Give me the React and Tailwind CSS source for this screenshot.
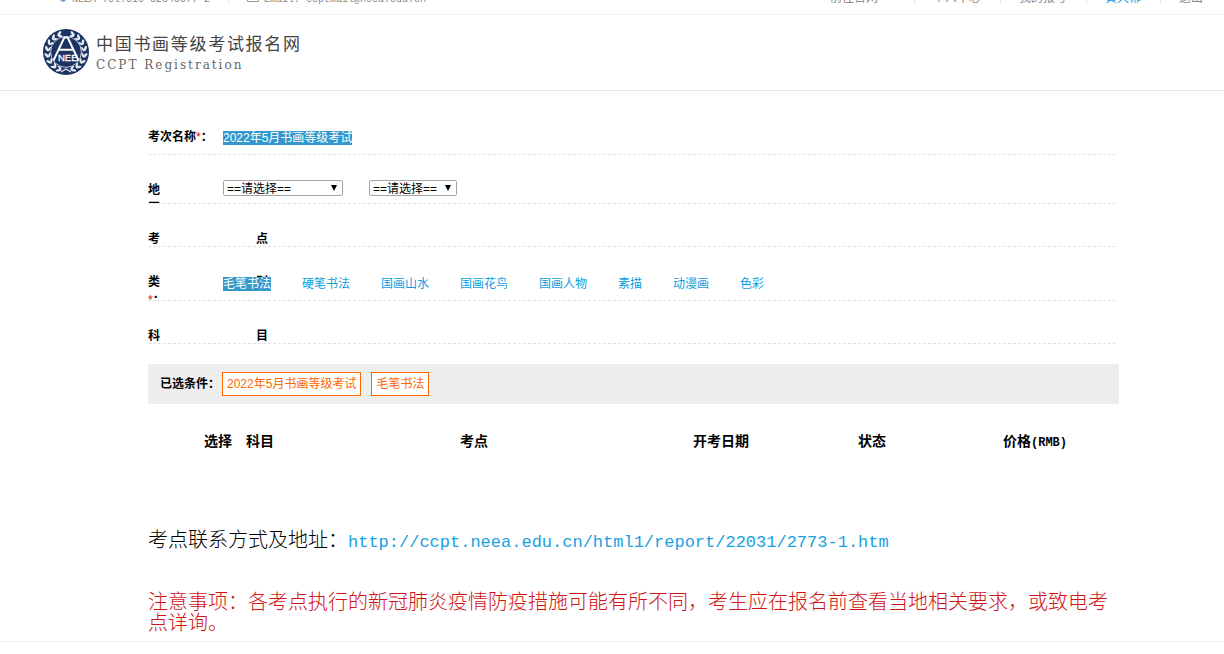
const navLinks = [
  { label: '前往官网', style: 'pr-9' },
  { label: '个人中心', style: 'pr-[19px] pl-[18px]' },
  { label: '我的报考', style: 'pr-[19px] pl-[18px]' },
  { label: '黄大郴', style: 'pr-[19px] pl-[18px] text-[#0f9de0]' },
  { label: '退出', style: 'pl-[18px]' },
]

const categories = ['毛笔书法', '硬笔书法', '国画山水', '国画花鸟', '国画人物', '素描', '动漫画', '色彩']

const leaves = [20, 40, 60, 80, 100, 120, 140, 158]

function Logo() {
  return (
    <svg viewBox="0 0 46 46" className="size-[46px] shrink-0" role="img" aria-label="NEEA">
      <circle cx="23" cy="23" r="23" fill="#1c3263" />
      {/* laurel wreath, one branch per side */}
      {[1, -1].map((side) => (
        <g key={side} fill="#e6ebf3">
          {leaves.map((a) => (
            <g key={a} transform={`rotate(${a * side} 23 23)`}>
              <ellipse cx="23" cy="3.4" rx="2.9" ry="1.3" transform={`rotate(${side * 32} 23 3.4)`} />
              <ellipse cx="23" cy="6.2" rx="2.5" ry="1.1" transform={`rotate(${side * -28} 23 6.2)`} />
            </g>
          ))}
        </g>
      ))}
      <path d="M18 43l5-3 5 3" fill="none" stroke="#e6ebf3" strokeWidth="1.2" />
      <circle cx="23" cy="23" r="15.4" fill="#1c3263" stroke="#b9c4d8" strokeWidth="1" />
      <path d="M10.5 31.5L21.3 8.5h3.4L35.5 31.5M16.5 20.7h13" fill="none" stroke="#fff" strokeWidth="2" />
      <path d="M16 23.4h14.5l3 8H16z" fill="#1c3263" />
      <text x="15" y="31.5" fill="#fff" stroke="#fff" strokeWidth="0.3" fontSize="9.5" fontFamily="Liberation Sans, sans-serif">NEE</text>
    </svg>
  )
}

function TopBar() {
  return (
    <div className="flex h-[39px] items-start justify-between border-b border-[#f2f2f2] pt-4 pr-[21px] pl-[56px] text-xs leading-3 text-[#888]">
      <div className="flex font-['Liberation_Mono',monospace] text-[10px] leading-4">
        <span className="flex gap-1">
          <svg viewBox="0 0 12 12" className="size-3" aria-hidden="true">
            <path d="M2 0l2 2-1 2 2 2 2-1 3 3-2 2C5 10 1 6 1 2z" fill="#6fa3cf" />
          </svg>
          NEEA Tel:010-82345677-2
        </span>
        <span className="mx-[18px] h-3 w-px bg-[#e5e5e5]" />
        <span className="flex gap-[5px]">
          <svg viewBox="0 0 12 12" className="size-3" aria-hidden="true">
            <path d="M.5 .5h11v9H.5zM.5 1L6 6l5.5-5" fill="none" stroke="#999" />
          </svg>
          Email: ccptmail@neea.edu.cn
        </span>
      </div>
      <nav className="flex divide-x divide-[#e5e5e5]">
        {navLinks.map(({ label, style }) => (
          <a key={label} href="#" className={style}>{label}</a>
        ))}
      </nav>
    </div>
  )
}

function Row({ height, label, children }) {
  return (
    <div className={`mr-[3px] flex overflow-hidden border-b border-dashed border-[#e2e2e2] pt-[25px] ${height}`}>
      {/* two-character labels are justified over a box wider than the column */}
      <div className="w-[75px] shrink-0 pt-px font-bold">
        <div className="w-[120px]">{label}</div>
      </div>
      {children}
    </div>
  )
}

function Spread({ text }) {
  return (
    <span className="flex justify-between">
      {[...text].map((c) => <span key={c}>{c}</span>)}
    </span>
  )
}

function Select({ label, width }) {
  return (
    <div className={`relative h-4 ${width}`}>
      <select
        aria-label={label}
        className="block h-4 w-full appearance-none rounded-xs border border-[#a6a6a6] bg-white pt-px pl-[3px] text-xs leading-[14px] text-black"
      >
        <option>==请选择==</option>
      </select>
      <svg viewBox="0 0 6 6" className="pointer-events-none absolute top-[5px] right-1.5 size-1.5" aria-hidden="true">
        <path d="M0 0h6L3 6z" fill="#000" />
      </svg>
    </div>
  )
}

function Chip({ children }) {
  return (
    <button type="button" className="h-6 border border-[#ff6600] bg-white px-1 leading-[22px] text-[#ff6600]">
      {children}
    </button>
  )
}

export default function App() {
  return (
    <div lang="zh-CN" className="overflow-hidden bg-white font-['Liberation_Sans','Noto_Sans_CJK_SC',sans-serif] text-xs text-black">
      {/* the top bar is mostly scrolled out of view */}
      <div className="-mt-6">
        <TopBar />

        <header className="flex h-[76px] items-center gap-[7px] border-b border-[#e5e5e5] pb-px pl-[43px]">
          <Logo />
          <div className="pt-[3px]">
            <h1 className="text-[17px] leading-[22px] tracking-widest text-[#444]">中国书画等级考试报名网</h1>
            <p className="font-['DejaVu_Serif',serif] text-xs leading-[18px] tracking-[2px] text-[#666]">
              CCPT Registration
            </p>
          </div>
        </header>

        <main className="pr-[105px] pl-[148px]">
          <section className="pt-[11px] leading-[18px]">
            <Row height="h-[53px]" label={<>考次名称<span className="font-normal text-red-600">*</span>：</>}>
              <a href="#" className="mt-1 h-[14px] bg-[#3398cc] leading-[14px] text-white">2022年5月书画等级考试</a>
            </Row>
            <Row height="h-[49px]" label={<>地<br />区</>}>
              <div className="flex gap-[26px]">
                <Select label="省份" width="w-[120px]" />
                <Select label="城市" width="w-[88px]" />
              </div>
            </Row>
            <Row height="h-[43px]" label={<Spread text="考点" />} />
            <Row
              height="h-[54px]"
              label={<><Spread text="类别" /><span className="font-normal text-red-600">*</span>：</>}
            >
              <div className="z-10 mt-[5px] flex gap-[31px] leading-[14px]">
                {categories.map((name, i) => (
                  <a
                    key={name}
                    href="#"
                    className={i === 0 ? 'h-[14px] bg-[#3398cc] text-white' : 'h-[14px] text-[#0f9de0]'}
                  >
                    {name}
                  </a>
                ))}
              </div>
            </Row>
            <Row height="h-[43px]" label={<Spread text="科目" />} />
          </section>

          <div className="mt-5 flex h-10 items-center bg-[#eee] pl-3">
            <span className="mr-0.5 font-bold">已选条件：</span>
            <div className="flex gap-2.5">
              <Chip>2022年5月书画等级考试</Chip>
              <Chip>毛笔书法</Chip>
            </div>
          </div>

          <table className="mt-[27px] w-full table-fixed text-sm leading-5">
            <thead>
              <tr>
                <th className="w-[91px] pr-[7px] text-right">选择</th>
                <th className="w-[42px]">科目</th>
                <th>考点</th>
                <th className="w-[108px]">开考日期</th>
                <th className="w-[194px]">状态</th>
                <th className="w-[150px] pr-[18px]">
                  价格<span className="font-['Liberation_Mono',monospace] text-xs">(RMB)</span>
                </th>
              </tr>
            </thead>
          </table>

          <p className="mt-[79px] text-xl leading-[21px] font-light">
            考点联系方式及地址：
            <a
              href="http://ccpt.neea.edu.cn/html1/report/22031/2773-1.htm"
              className="font-['Liberation_Mono',monospace] text-[17px] text-[#1a9fe0]"
            >
              http://ccpt.neea.edu.cn/html1/report/22031/2773-1.htm
            </a>
          </p>
          <p className="mt-[39px] text-xl leading-[21px] font-light text-[#d01414]">
            注意事项：各考点执行的新冠肺炎疫情防疫措施可能有所不同，考生应在报名前查看当地相关要求，或致电考点详询。
          </p>
        </main>

        <footer className="mt-[7px] border-t border-[#eee]" />
      </div>
    </div>
  )
}
